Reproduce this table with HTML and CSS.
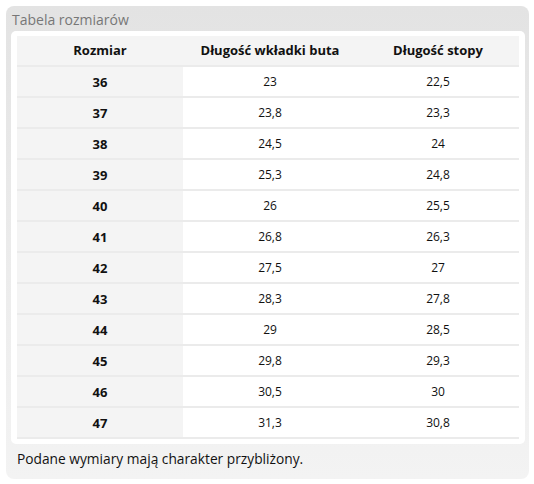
FILE: index.html
```html
<!DOCTYPE html>
<html lang="pl">
<head>
<meta charset="utf-8">
<link rel="stylesheet" href="styles.css">
</head>
<body>
<div class="panel">
  <div class="title">Tabela rozmiarów</div>
  <div class="card">
    <table class="sizes">
      <thead>
        <tr><th>Rozmiar</th><th>Długość wkładki buta</th><th>Długość stopy</th></tr>
      </thead>
      <tbody>
        <tr><td class="size">36</td><td>23</td><td>22,5</td></tr>
        <tr><td class="size">37</td><td>23,8</td><td>23,3</td></tr>
        <tr><td class="size">38</td><td>24,5</td><td>24</td></tr>
        <tr><td class="size">39</td><td>25,3</td><td>24,8</td></tr>
        <tr><td class="size">40</td><td>26</td><td>25,5</td></tr>
        <tr><td class="size">41</td><td>26,8</td><td>26,3</td></tr>
        <tr><td class="size">42</td><td>27,5</td><td>27</td></tr>
        <tr><td class="size">43</td><td>28,3</td><td>27,8</td></tr>
        <tr><td class="size">44</td><td>29</td><td>28,5</td></tr>
        <tr><td class="size">45</td><td>29,8</td><td>29,3</td></tr>
        <tr><td class="size">46</td><td>30,5</td><td>30</td></tr>
        <tr><td class="size">47</td><td>31,3</td><td>30,8</td></tr>
      </tbody>
    </table>
  </div>
  <div class="note">Podane wymiary mają charakter przybliżony.</div>
</div>
</body>
</html>
```
FILE: styles.css
```css
html, body {
  margin: 0;
  padding: 0;
  background: #ffffff;
}
body {
  padding: 6px 5px 5px 6px;
  font-family: "Open Sans", "Liberation Sans", sans-serif;
  color: #111;
}
.panel {
  width: 523px;
  height: 473px;
  box-sizing: border-box;
  border-radius: 8px;
  background: linear-gradient(to bottom, #e3e3e3 0%, #f3f3f3 100%);
  padding: 3px 4px 0 5px;
}
.title {
  font-size: 14px;
  line-height: 22px;
  color: #777;
  padding-left: 1px;
}
.card {
  margin-top: 0;
  background: #fff;
  border-radius: 5px;
  padding: 5px 6px 5px 6px;
}
.sizes {
  width: 100%;
  border-collapse: collapse;
  table-layout: fixed;
}
.sizes th {
  background: #f4f4f4;
  font-weight: 700;
  font-size: 13px;
  height: 28px;
  padding: 0 0 1px 0;
  border-bottom: 2px solid #ebebeb;
  color: #111;
}
.sizes th:nth-child(1) { width: 166px; }
.sizes th:nth-child(2) { width: 174px; }
.sizes td {
  text-align: center;
  font-size: 12px;
  height: 29px;
  padding: 0;
  border-bottom: 2px solid #ebebeb;
}
.sizes td.size {
  background: #f4f4f4;
  font-weight: 700;
  font-size: 13px;
}
.note {
  font-size: 13.75px;
  line-height: 20px;
  padding: 5px 0 0 6px;
  color: #111;
}
```
